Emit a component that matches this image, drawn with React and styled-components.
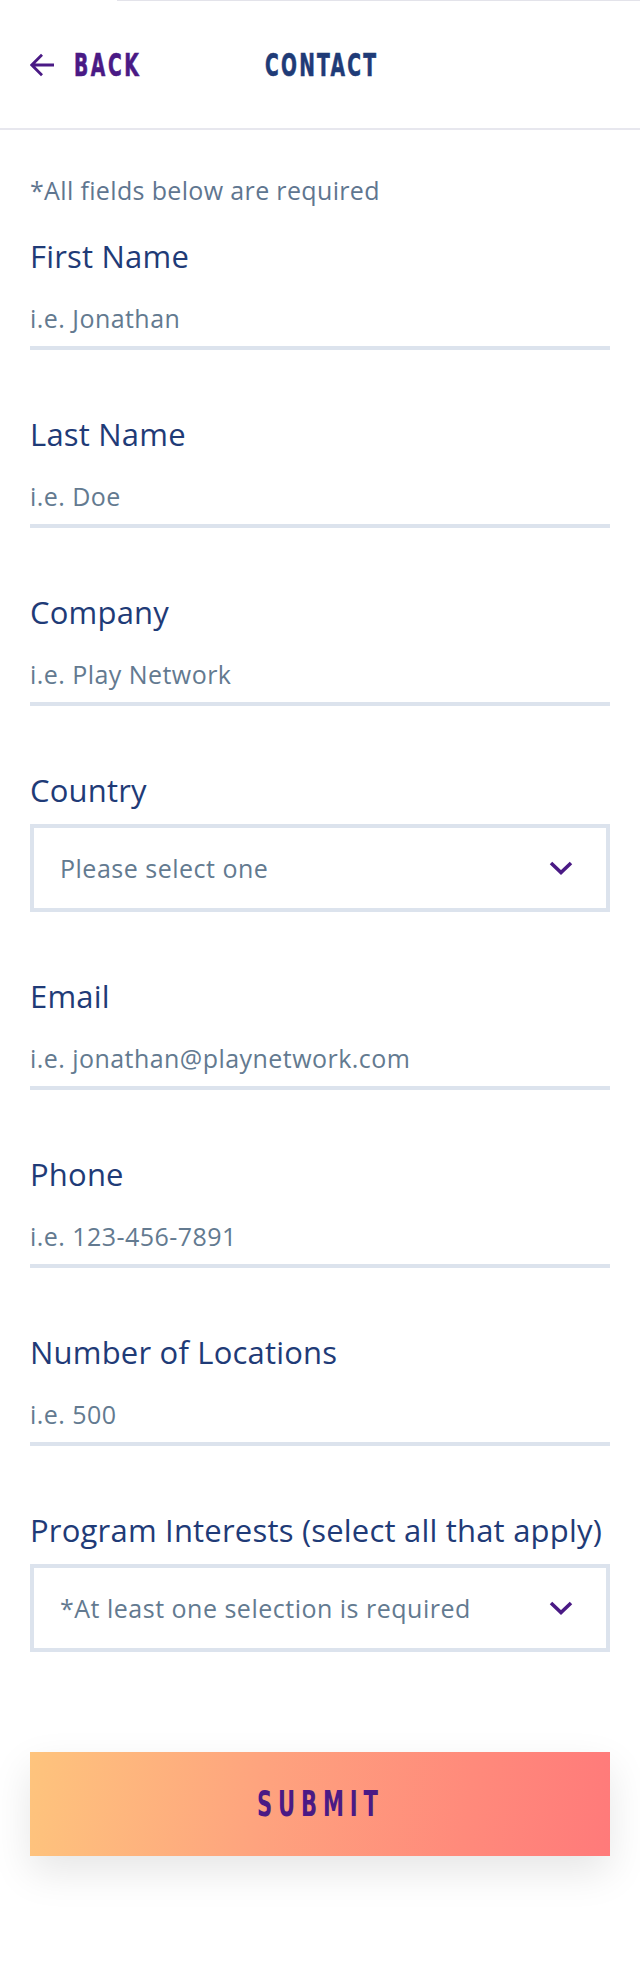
import React from "react";
import styled, { createGlobalStyle, css } from "styled-components";

const GlobalStyle = createGlobalStyle`
  * { box-sizing: border-box; }
  html, body { margin: 0; padding: 0; background: #ffffff; }
  body { font-family: "Open Sans", "Liberation Sans", sans-serif; }
`;

const NAVY = "#1f3b77";
const PURPLE = "#4a1a85";
const MUTED = "#637a90";
const LINE = "#dce3ed";

const condensed = css`
  display: inline-block;
  font-family: "DejaVu Sans Condensed", "DejaVu Sans", sans-serif;
  font-stretch: condensed;
  font-weight: 700;
  line-height: 1;
  white-space: nowrap;
  transform: scaleX(0.65);
`;

const Page = styled.div`
  width: 640px;
  min-height: 1976px;
  background: #fff;
  display: flex;
  flex-direction: column;
`;

const TopRule = styled.div`
  height: 1px;
  margin-left: 117px;
  background: #e3e3ea;
`;

const Header = styled.header`
  height: 129px;
  border-bottom: 2px solid #e7e7ee;
  display: flex;
  align-items: center;
  padding-left: 30px;
`;

const BackLink = styled.a`
  display: flex;
  align-items: center;
  gap: 20px;
  width: 235px;
  flex-shrink: 0;
  color: ${PURPLE};
  text-decoration: none;
  cursor: pointer;
`;

const BackText = styled.span`
  ${condensed};
  font-size: 32px;
  letter-spacing: 4px;
  transform-origin: left center;
  color: ${PURPLE};
  -webkit-text-stroke: 0.6px ${PURPLE};
`;

const Title = styled.h1`
  ${condensed};
  margin: 0;
  font-size: 32px;
  letter-spacing: 3.5px;
  transform-origin: left center;
  color: ${NAVY};
  -webkit-text-stroke: 0.6px ${NAVY};
`;

const Form = styled.form`
  display: flex;
  flex-direction: column;
  padding: 0 30px;
`;

const Note = styled.p`
  margin: 40px 0 0;
  font-size: 25px;
  letter-spacing: 0.35px;
  line-height: 40px;
  color: #5f7690;
`;

const FieldList = styled.div`
  display: flex;
  flex-direction: column;
  gap: 64px;
  margin-top: 26px;
`;

const Field = styled.div`
  display: flex;
  flex-direction: column;
`;

const Label = styled.label`
  font-size: 31px;
  letter-spacing: 0.2px;
  line-height: 40px;
  color: ${NAVY};
  white-space: nowrap;
`;

const TextInput = styled.input`
  margin-top: 22px;
  width: 100%;
  height: 52px;
  padding: 0 0 8px 0;
  border: none;
  border-bottom: 4px solid ${LINE};
  font-family: "Open Sans", "Liberation Sans", sans-serif;
  font-size: 25px;
  letter-spacing: 0.45px;
  color: ${NAVY};
  background: transparent;
  outline: none;
  &::placeholder {
    color: ${MUTED};
    opacity: 1;
  }
`;

const SelectBox = styled.div`
  margin-top: 14px;
  height: 88px;
  border: 4px solid ${LINE};
  display: flex;
  align-items: center;
  justify-content: space-between;
  padding: 0 33px 0 26px;
  font-size: 25px;
  letter-spacing: 0.5px;
  color: ${MUTED};
  cursor: pointer;
`;

const SubmitButton = styled.button`
  margin-top: 100px;
  width: 100%;
  height: 104px;
  border: none;
  padding: 0;
  background: linear-gradient(97deg, #fec47d 0%, #fea37e 40%, #ff8a7b 75%, #ff7a7a 100%);
  box-shadow: 0 16px 40px rgba(0, 0, 0, 0.1);
  display: flex;
  align-items: center;
  justify-content: center;
  cursor: pointer;
`;

const SubmitLabel = styled.span`
  ${condensed};
  font-size: 36px;
  letter-spacing: 9px;
  transform-origin: center center;
  color: ${PURPLE};
`;

const ArrowIcon = () => (
  <svg width="24" height="24" viewBox="0 0 24 24" fill="none">
    <path d="M12 1.8 L1.8 12 L12 22.2 M1.8 12 H24" stroke={PURPLE} strokeWidth="2.8" />
  </svg>
);

const Chevron = () => (
  <svg width="24" height="14" viewBox="0 0 24 14" fill="none">
    <path d="M2 2 L12 11.5 L22 2" stroke={PURPLE} strokeWidth="3.6" />
  </svg>
);

const textFields = [
  { id: "first", label: "First Name", placeholder: "i.e. Jonathan" },
  { id: "last", label: "Last Name", placeholder: "i.e. Doe" },
  { id: "company", label: "Company", placeholder: "i.e. Play Network" },
  { id: "country", label: "Country", select: "Please select one" },
  { id: "email", label: "Email", placeholder: "i.e. jonathan@playnetwork.com" },
  { id: "phone", label: "Phone", placeholder: "i.e. 123-456-7891" },
  { id: "locations", label: "Number of Locations", placeholder: "i.e. 500" },
  {
    id: "interests",
    label: "Program Interests (select all that apply)",
    select: "*At least one selection is required",
  },
];

export default function App() {
  return (
    <>
      <GlobalStyle />
      <Page>
        <TopRule />
        <Header>
          <BackLink>
            <ArrowIcon />
            <BackText>BACK</BackText>
          </BackLink>
          <Title>CONTACT</Title>
        </Header>
        <Form onSubmit={(e) => e.preventDefault()}>
          <Note>*All fields below are required</Note>
          <FieldList>
            {textFields.map((f) => (
              <Field key={f.id}>
                <Label htmlFor={f.id}>{f.label}</Label>
                {f.select ? (
                  <SelectBox id={f.id} role="button">
                    <span>{f.select}</span>
                    <Chevron />
                  </SelectBox>
                ) : (
                  <TextInput id={f.id} placeholder={f.placeholder} />
                )}
              </Field>
            ))}
          </FieldList>
          <SubmitButton type="submit">
            <SubmitLabel>SUBMIT</SubmitLabel>
          </SubmitButton>
        </Form>
      </Page>
    </>
  );
}
